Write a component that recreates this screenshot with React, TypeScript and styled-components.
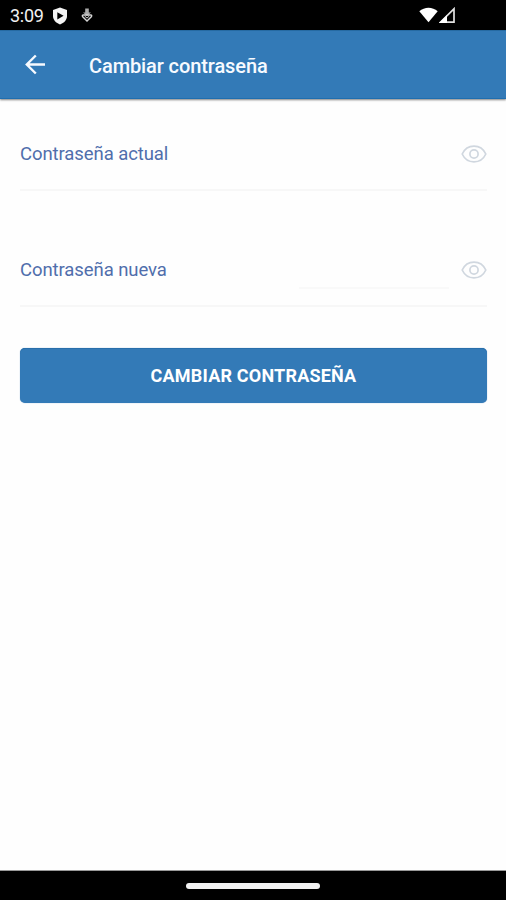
import React from "react";
import styled, { createGlobalStyle } from "styled-components";

const GlobalStyle = createGlobalStyle`
  * { box-sizing: border-box; }
  body { margin: 0; background: #fefefe; font-family: Roboto, sans-serif; }
`;

const Screen = styled.div`
  display: flex;
  flex-direction: column;
  width: 506px;
  height: 900px;
  overflow: hidden;
  background: #fefefe;
`;

const StatusBar = styled.div`
  display: flex;
  align-items: center;
  flex: none;
  height: 30px;
  padding: 1px 51px 0 10px;
  background: #000;
  color: #f2f2f2;
`;

const Clock = styled.span`
  width: 42px;
  font-size: 18px;
  line-height: 28px;
  letter-spacing: -0.3px;
`;

const StatusIcon = styled.svg<{ $gap?: number }>`
  display: block;
  flex: none;
  margin-left: ${(p) => p.$gap ?? 0}px;
`;

const Signals = styled.div`
  display: flex;
  align-items: center;
  margin-left: auto;
`;

const AppBar = styled.header`
  display: flex;
  align-items: center;
  flex: none;
  height: 69px;
  padding-left: 25px;
  background: #337ab7;
  border-top: 1px solid #266aa2;
  border-bottom: 1px solid #1f6eaf;
  box-shadow: 0 1px 2px rgba(0, 0, 0, 0.5);
  color: #f7faff;
`;

const BackButton = styled.button`
  width: 22px;
  height: 22px;
  padding: 0;
  border: 0;
  background: none;
  color: inherit;

  svg { display: block; }
`;

const Title = styled.h1`
  margin: 2px 0 0 42px;
  font-size: 20px;
  font-weight: 500;
  line-height: 26px;
  letter-spacing: -0.1px;
`;

const Form = styled.form`
  display: flex;
  flex-direction: column;
  flex: 1;
  padding: 18px 19px 0 20px;
`;

const Field = styled.div`
  display: flex;
  align-items: center;
  height: 74px;
  margin-bottom: 42px;
  padding-top: 2px;
  border-bottom: 2px solid #f7f7f7;

  & + & { margin-bottom: 40px; }
`;

const Label = styled.label`
  font-size: 18.5px;
  line-height: 26px;
  letter-spacing: -0.08px;
  color: #506eac;
`;

const EntryLine = styled.span<{ $visible?: boolean }>`
  align-self: flex-end;
  width: 150px;
  height: 2px;
  margin: 0 12px 16px auto;
  background: ${(p) => (p.$visible ? "#f9f9f9" : "transparent")};
`;

const RevealButton = styled.button`
  width: 26px;
  height: 20px;
  padding: 0;
  border: 0;
  background: none;
  color: #d0d7df;

  svg { display: block; }
`;

const SubmitButton = styled.button`
  height: 55px;
  margin-top: 1px;
  padding: 1px 0 0;
  border: 0;
  border-radius: 5px;
  background: #337ab7;
  box-shadow: inset 0 1px #286fab, 0 0 1px #6a97c5;
  color: #fff;
  font: 700 18px/24px Roboto, sans-serif;
  letter-spacing: 0.2px;
`;

const NavigationBar = styled.div`
  display: flex;
  justify-content: center;
  flex: none;
  height: 30px;
  padding-top: 12px;
  border-top: 1px solid #999;
  background: #000;
`;

const HomeHandle = styled.div`
  width: 134px;
  height: 6px;
  border-radius: 3px;
  background: #f2f2f2;
`;

const EyeIcon = () => (
  <svg width="26" height="20" viewBox="0 0 26 20" fill="none" stroke="currentColor" strokeWidth="1.7">
    <path d="M1.2 10C3.5 5 8 2.1 13 2.1S22.5 5 24.8 10C22.5 15 18 17.9 13 17.9S3.5 15 1.2 10Z" />
    <circle cx="13" cy="10" r="4.1" />
  </svg>
);

const PasswordField = ({ id, label, entryLine }: { id: string; label: string; entryLine?: boolean }) => (
  <Field>
    <Label id={id}>{label}</Label>
    <EntryLine $visible={entryLine} />
    <RevealButton type="button" aria-labelledby={id}>
      <EyeIcon />
    </RevealButton>
  </Field>
);

export default function App() {
  return (
    <Screen>
      <GlobalStyle />
      <StatusBar>
        <Clock>3:09</Clock>
        <StatusIcon width="16" height="18" viewBox="0 0 16 18">
          <path d="M8 .5 15 3v6c0 4-3 7-7 8.5C4 16 1 13 1 9V3Z" fill="#f4f4f4" />
          <path d="m5.3 5.2 6.3 3.6-6.3 3.6Z" fill="#000" />
        </StatusIcon>
        <StatusIcon $gap={13} width="12" height="15" viewBox="0 0 12 15">
          <path d="M4.2.6h3.6v3.8H10L6 8 2 4.4h2.2Z" fill="#ababab" />
          <path d="M2.4 7h7.4q1.3 0 .7 1.5L6 13 1.5 8.5Q.9 7 2.4 7Z" fill="none" stroke="#d4d4d4" strokeWidth="1.4" />
          <path d="m3.7 8.1 2.3 2 2.3-2" fill="none" stroke="#d4d4d4" strokeWidth="1" />
        </StatusIcon>
        <Signals>
          <StatusIcon width="19" height="17" viewBox="0 0 19 17">
            <path d="M.3 4.3C5.5-.5 13.5-.5 18.7 4.3L9.5 15.3Z" fill="#fff" />
          </StatusIcon>
          <StatusIcon $gap={1} width="16" height="17" viewBox="0 0 16 17">
            <path d="M15 1.8v13.4H1.4Z" fill="none" stroke="#e2e2e2" strokeWidth="1.7" />
            <path d="M8 8v8H0Z" fill="#fff" />
          </StatusIcon>
        </Signals>
      </StatusBar>
      <AppBar>
        <BackButton type="button" aria-label="Atrás">
          <svg width="22" height="22" viewBox="0 0 22 22" fill="none" stroke="currentColor" strokeWidth="2.4">
            <path d="M20 10.5H2.2M10.8 1.5l-9 9 9 9" />
          </svg>
        </BackButton>
        <Title>Cambiar contraseña</Title>
      </AppBar>
      <Form>
        <PasswordField id="current-password" label="Contraseña actual" />
        <PasswordField id="new-password" label="Contraseña nueva" entryLine />
        <SubmitButton type="button">CAMBIAR CONTRASEÑA</SubmitButton>
      </Form>
      <NavigationBar>
        <HomeHandle />
      </NavigationBar>
    </Screen>
  );
}
